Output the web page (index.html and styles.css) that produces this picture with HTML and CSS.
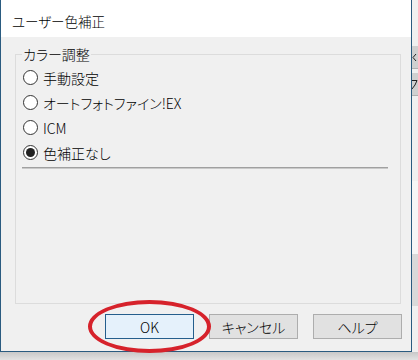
FILE: index.html
```html
<!DOCTYPE html>
<html lang="ja">
<head>
    <meta charset="UTF-8">
    <meta name="viewport" content="width=device-width, initial-scale=1.0">
    <title>ユーザー色補正</title>
    <link rel="stylesheet" href="styles.css">
</head>
<body>
    <div class="screen">
        <div class="window">
            <div class="titlebar">ユーザー色補正</div>
            <div class="content">
                <fieldset class="group">
                    <legend>カラー調整</legend>
                    <label class="radio"><span class="dot"></span>手動設定</label>
                    <label class="radio"><span class="dot"></span>オートフォトファイン!EX</label>
                    <label class="radio"><span class="dot"></span>ICM</label>
                    <label class="radio"><span class="dot checked"></span>色補正なし</label>
                    <div class="separator"></div>
                </fieldset>
                <div class="buttons">
                    <button class="btn default">OK</button>
                    <button class="btn">キャンセル</button>
                    <button class="btn">ヘルプ</button>
                </div>
            </div>
            <!-- 赤い丸印 -->
            <span class="mark"></span>
        </div>
        <!-- 後ろのウィンドウの端 -->
        <div class="backdrop">
            <div class="bd-light"></div>
            <div class="bd-tab">
                <svg width="6" height="23" viewBox="0 0 6 23"><path d="M4 8 L1 11.5 L4 15" fill="none" stroke="#222" stroke-width="1"/></svg>
            </div>
            <div class="bd-tab">
                <svg width="6" height="23" viewBox="0 0 6 23"><path d="M0 7.5 H5 L3 12 L0 16" fill="none" stroke="#222" stroke-width="1"/></svg>
            </div>
            <div class="bd-light tall"></div>
            <div class="bd-line"></div>
            <div class="bd-light mid"></div>
            <div class="bd-grey"></div>
            <div class="bd-light"></div>
        </div>
    </div>
    <div class="floor"></div>
</body>
</html>
```

FILE: styles.css
```css
* {
    box-sizing: border-box;
}

body {
    margin: 0;
    width: 418px;
    height: 360px;
    overflow: hidden;
    background: #dcdcdc;
    font-family: "Noto Sans CJK JP", "Noto Sans", sans-serif;
    font-feature-settings: "palt";
    font-size: 14px;
    font-weight: 300;
    color: #000;
}

.screen {
    display: flex;
    height: 352px;
}

.window {
    position: relative;
    width: 412px;
    height: 352px;
    flex: none;
    display: flex;
    flex-direction: column;
    background: #f0f0f0;
    border: 1px solid #2a5b80;
    border-top: none;
}

.titlebar {
    height: 37px;
    flex: none;
    background: #fff;
    padding: 5px 0 0 11px;
    line-height: 32px;
    font-size: 13.5px;
}

.content {
    flex: 1;
    display: flex;
    flex-direction: column;
    padding: 7px 9px 12px 14px;
}

.group {
    flex: 1;
    margin: 0 1px 10px 0;
    padding: 1px 6px 0 6px;
    border: 1px solid #dcdcdc;
    min-width: 0;
}

.group legend {
    padding: 0 1px;
    line-height: 20px;
}

.radio {
    display: flex;
    align-items: center;
    height: 25px;
    gap: 5px;
    padding-left: 1px;
    white-space: nowrap;
}

.dot {
    width: 15px;
    height: 15px;
    flex: none;
    border: 1px solid #333;
    border-radius: 50%;
    background: #fff;
    display: flex;
    align-items: center;
    justify-content: center;
}

.dot.checked::after {
    content: "";
    width: 9px;
    height: 9px;
    border-radius: 50%;
    background: #222;
}

.separator {
    margin: 2px 6px 0 0;
    border-top: 1px solid #a0a0a0;
    border-bottom: 1px solid #c9c9c9;
}

.buttons {
    display: flex;
    justify-content: flex-end;
    gap: 15px;
}

.btn {
    width: 89px;
    height: 25px;
    padding: 0;
    font: inherit;
    font-size: 14px;
    color: #000;
    background: #e1e1e1;
    border: 1px solid #adadad;
}

.btn.default {
    background: #e5f1fb;
    border-color: #255e8c;
}

.mark {
    position: absolute;
    left: 87px;
    top: 300px;
    width: 123px;
    height: 53px;
    border: 4px solid #d6222b;
    border-radius: 50%;
}

.backdrop {
    flex: 1;
    display: flex;
    flex-direction: column;
    background: #f0f0f0;
}

.bd-light {
    height: 52px;
    background: #f0f0f0;
}

.bd-light.tall {
    height: 92px;
}

.bd-light.mid {
    height: 82px;
    background: #f6f6f6;
}

.bd-tab {
    height: 23px;
    margin-bottom: 4px;
    background: #d0d0d0;
    border-bottom: 1px solid #b0b0b0;
}

.bd-tab svg {
    display: block;
}

.bd-line {
    height: 1px;
    background: #9a9a9a;
}

.bd-grey {
    height: 60px;
    background: #d9d9d9;
}

.floor {
    height: 8px;
    background: linear-gradient(#c8c8c8, #e2e2e2);
}
```
